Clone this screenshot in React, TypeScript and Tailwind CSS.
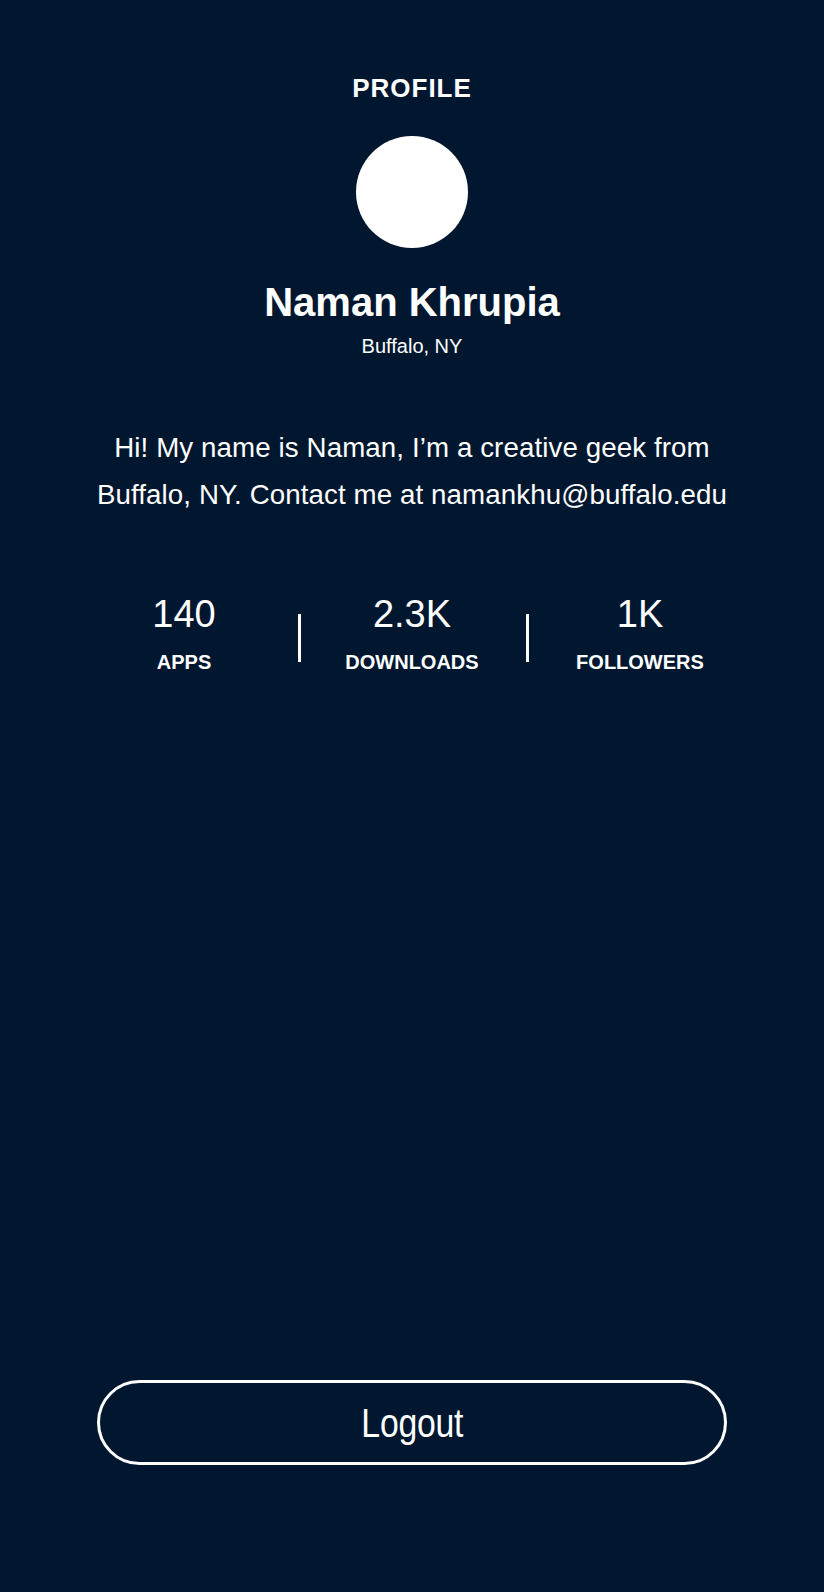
import React from "react";

const stats = [
  { value: "140", label: "APPS" },
  { value: "2.3K", label: "DOWNLOADS" },
  { value: "1K", label: "FOLLOWERS" },
];

export default function App() {
  return (
    <div
      className="min-h-screen w-full bg-[#011730] text-white flex flex-col items-center"
      style={{ fontFamily: '"Liberation Sans", Arial, sans-serif' }}
    >
      <h1 className="mt-[75px] text-[26px] leading-[26px] font-bold tracking-[1px]">PROFILE</h1>
      <div className="mt-[35px] w-[112px] h-[112px] rounded-full bg-white" />
      <h2 className="mt-[34px] text-[40px] leading-[40px] font-bold">Naman Khrupia</h2>
      <p className="mt-[14px] text-[20px] leading-[20px]">Buffalo, NY</p>
      <p className="mt-[68px] text-[27.7px] leading-[47px] tracking-[0.1px] text-center w-[720px]">
        Hi! My name is Naman, I’m a creative geek from
        <br />
        Buffalo, NY. Contact me at namankhu@buffalo.edu
      </p>
      <div className="mt-[77px] flex items-start">
        {stats.map((s, i) => (
          <React.Fragment key={s.label}>
            {i > 0 && <div className="mt-[19px] ml-[3px] w-[3px] h-[48px] bg-white" />}
            <div className="w-[222px] flex flex-col items-center">
              <span className="text-[38px] leading-[38px]">{s.value}</span>
              <span className="mt-[19px] text-[20px] leading-[20px] font-bold">{s.label}</span>
            </div>
          </React.Fragment>
        ))}
      </div>
      <button
        className="mt-auto mb-[127px] w-[630px] h-[85px] rounded-full border-[3px] border-white flex items-center justify-center text-[40px] text-white"
      >
        <span className="inline-block scale-x-[0.845] tracking-[-0.3px]">Logout</span>
      </button>
    </div>
  );
}
